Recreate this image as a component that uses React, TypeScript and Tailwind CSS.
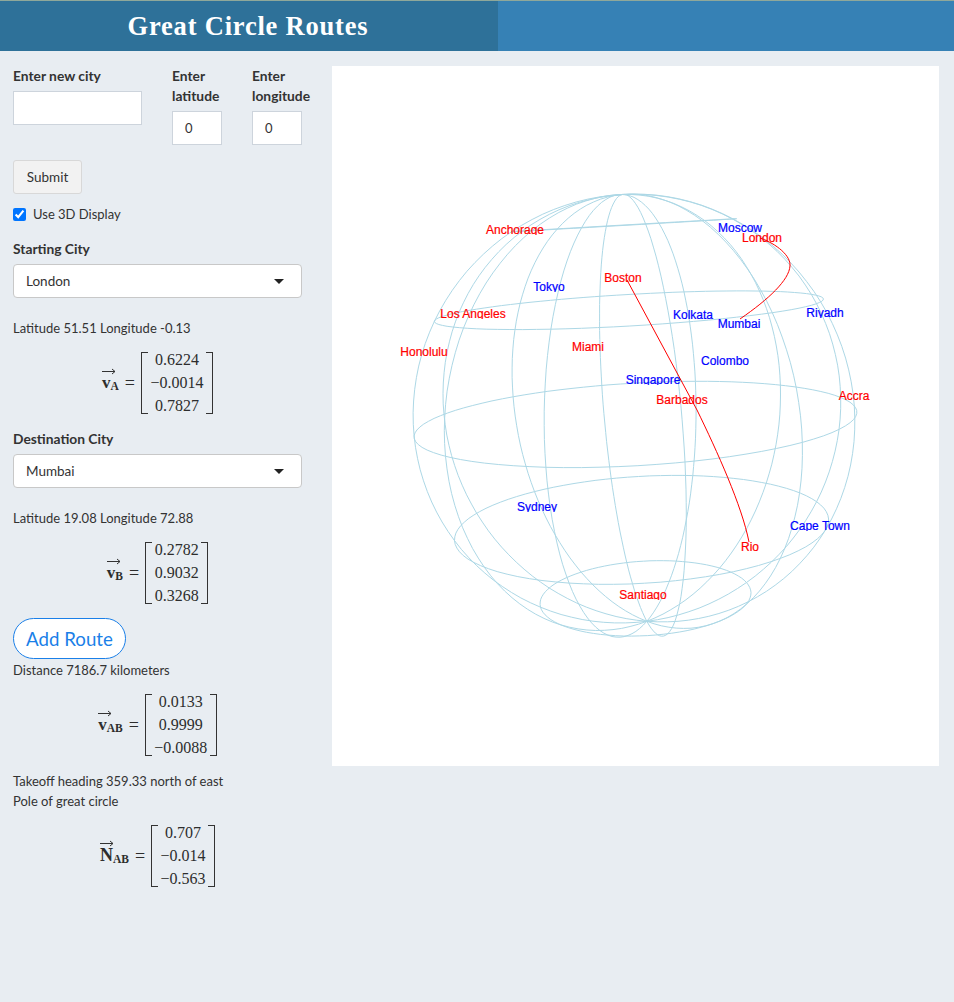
import React from "react";

// camera fit for the plotly globe
const CX = 303;
const CY = 350;
const DIST = 4.8;
const FOCAL = 1042;
const ELEV = (10.5 * Math.PI) / 180;
const ROLL = (3.3 * Math.PI) / 180;

function project(lat: number, lon: number) {
  const la = (lat * Math.PI) / 180;
  const lo = (lon * Math.PI) / 180;
  const x = Math.cos(la) * Math.sin(lo);
  const h = Math.sin(la);
  const d = Math.cos(la) * Math.cos(lo);
  const y = h * Math.cos(ELEV) - d * Math.sin(ELEV);
  const z = d * Math.cos(ELEV) + h * Math.sin(ELEV);
  const s = FOCAL / (DIST - z);
  const sx = x * s;
  const sy = y * s;
  return [
    CX + sx * Math.cos(ROLL) - sy * Math.sin(ROLL),
    CY - sx * Math.sin(ROLL) - sy * Math.cos(ROLL),
  ];
}

function toPath(points: number[][], close = false) {
  const d = points.map((p, i) => `${i === 0 ? "M" : "L"}${p[0].toFixed(1)} ${p[1].toFixed(1)}`).join(" ");
  return close ? d + " Z" : d;
}

const meridians = Array.from({ length: 12 }, (_, k) => {
  const pts: number[][] = [];
  for (let lat = -90; lat <= 90; lat += 3) pts.push(project(lat, 10 + 30 * k));
  return toPath(pts);
});

const rings = [60, 30, 0, -30, -60].map((lat) => {
  const pts: number[][] = [];
  for (let lon = 0; lon < 360; lon += 4) pts.push(project(lat, lon));
  return toPath(pts, true);
});

const routes = [
  "M428 172 C445 178 459 190 458 200 C457 214 437 233 408 253",
  "M295 214 L365 344 C385 385 410 440 417 476",
];

const cities = [
  { name: "Anchorage", x: 183, y: 164, c: "#ff0000" },
  { name: "Moscow", x: 408, y: 162, c: "#0000ff" },
  { name: "London", x: 430, y: 172, c: "#ff0000" },
  { name: "Boston", x: 291, y: 212, c: "#ff0000" },
  { name: "Tokyo", x: 217, y: 221, c: "#0000ff" },
  { name: "Los Angeles", x: 141, y: 248, c: "#ff0000" },
  { name: "Kolkata", x: 361, y: 249, c: "#0000ff" },
  { name: "Mumbai", x: 407, y: 258, c: "#0000ff" },
  { name: "Riyadh", x: 493, y: 247, c: "#0000ff" },
  { name: "Honolulu", x: 92, y: 286, c: "#ff0000" },
  { name: "Miami", x: 256, y: 281, c: "#ff0000" },
  { name: "Colombo", x: 393, y: 295, c: "#0000ff" },
  { name: "Singapore", x: 321, y: 314, c: "#0000ff" },
  { name: "Barbados", x: 350, y: 334, c: "#ff0000" },
  { name: "Accra", x: 522, y: 330, c: "#ff0000" },
  { name: "Sydney", x: 205, y: 441, c: "#0000ff" },
  { name: "Cape Town", x: 488, y: 460, c: "#0000ff" },
  { name: "Rio", x: 418, y: 481, c: "#ff0000" },
  { name: "Santiago", x: 311, y: 529, c: "#ff0000" },
];

function Globe() {
  return (
    <svg width="607" height="700" viewBox="0 0 607 700" className="block">
      <defs>
        {cities.map((c, i) => (
          <clipPath id={`lbl-${i}`} key={c.name}>
            <rect x={c.x - 60} y={c.y - 14} width="120" height="19" />
          </clipPath>
        ))}
      </defs>
      <g fill="none" stroke="#add8e6" strokeWidth="1">
        {meridians.map((d, i) => (
          <path key={i} d={d} />
        ))}
        {rings.map((d, i) => (
          <path key={i} d={d} />
        ))}
      </g>
      <g fill="none" stroke="#ff0000" strokeWidth="1">
        {routes.map((d, i) => (
          <path key={i} d={d} />
        ))}
      </g>
      {cities.map((c, i) => (
        <text
          key={c.name}
          x={c.x}
          y={c.y + 4}
          clipPath={`url(#lbl-${i})`}
          textAnchor="middle"
          fill={c.c}
          stroke={c.c}
          strokeWidth="0.2"
          fontSize="12"
          style={{ fontFamily: '"Liberation Sans", Arial, sans-serif' }}
        >
          {c.name}
        </text>
      ))}
    </svg>
  );
}

function MathVector({ sym, sub, values, big }: { sym: string; sub: string; values: string[]; big?: boolean }) {
  return (
    <div className="flex items-center justify-center font-['Liberation_Serif',serif] text-[16px] text-[#2d2d2d]">
      <span className="relative inline-flex items-baseline font-bold leading-[20px]">
        <svg width="14" height="7" viewBox="0 0 14 7" className="absolute left-0 -top-[5px]">
          <path d="M0 3.5H13M10 1L13 3.5L10 6" fill="none" stroke="#333" strokeWidth="1" />
        </svg>
        <span className={big ? "text-[18px]" : "text-[17px]"}>{sym}</span>
        <span className="text-[11.5px] translate-y-[2px]">{sub}</span>
      </span>
      <span className="mx-[6px] text-[18px]">=</span>
      <div className="relative flex flex-col h-[62px] px-[8.5px] justify-center items-center border-x-[1.5px] border-[#333]">
        <span className="absolute left-0 top-0 w-[6px] border-t-[1.5px] border-[#333]" />
        <span className="absolute left-0 bottom-0 w-[6px] border-b-[1.5px] border-[#333]" />
        <span className="absolute right-0 top-0 w-[6px] border-t-[1.5px] border-[#333]" />
        <span className="absolute right-0 bottom-0 w-[6px] border-b-[1.5px] border-[#333]" />
        {values.map((v) => (
          <span key={v} className="leading-[23px] shrink-0 -translate-y-[1px]">{v}</span>
        ))}
      </div>
    </div>
  );
}

function CitySelect({ value }: { value: string }) {
  return (
    <div className="flex items-center justify-between h-[34px] w-[289px] bg-white border border-[#c8c8c8] rounded-[4px] pl-[12px] pr-[17px] text-[13.5px]">
      <span>{value}</span>
      <span className="w-0 h-0 border-x-[5px] border-x-transparent border-t-[5px] border-t-[#222]" />
    </div>
  );
}

export default function App() {
  return (
    <div className="min-h-[1002px] bg-[#e8edf2] text-[13px] leading-[20px] text-[#333] font-['Lato','Noto_Sans',sans-serif]">
      <header className="flex h-[51px] border-t border-[#8fa89a]">
        <div className="flex w-[498px] items-center justify-center pr-[2px] bg-[#2e7199] text-white font-['Liberation_Serif',serif] font-bold text-[26.5px] tracking-[0.8px]">
          Great Circle Routes
        </div>
        <div className="flex-1 bg-[#3681b5]" />
      </header>
      <div className="flex">
        <aside className="w-[332px] pl-[13px] pt-[15px]">
          <div className="flex">
            <div className="w-[159px]">
              <div className="font-bold text-[13.8px] mb-[5px]">Enter new city</div>
              <div className="h-[34px] w-[129px] bg-white border border-[#cdd4dc]" />
            </div>
            <div className="w-[80px]">
              <div className="font-bold text-[13.8px] mb-[5px] w-[66px]">Enter<br />latitude</div>
              <div className="h-[34px] w-[50px] bg-white border border-[#cdd4dc] pl-[12px] leading-[32px]">0</div>
            </div>
            <div>
              <div className="font-bold text-[13.8px] mb-[5px] w-[66px]">Enter<br />longitude</div>
              <div className="h-[34px] w-[50px] bg-white border border-[#cdd4dc] pl-[12px] leading-[32px]">0</div>
            </div>
          </div>
          <button className="mt-[15px] h-[34px] w-[69px] bg-[#f2f2f2] border border-[#d8d8d8] rounded-[3px] text-[13.5px]">Submit</button>
          <label className="flex items-center mt-[10px] gap-[7px] h-[20px]">
            <input type="checkbox" defaultChecked readOnly className="w-[13px] h-[13px] accent-[#0075ff]" />
            Use 3D Display
          </label>
          <div className="font-bold text-[13.8px] mt-[15px] mb-[5px]">Starting City</div>
          <CitySelect value="London" />
          <p className="mt-[20px]">Latitude 51.51 Longitude -0.13</p>
          <div className="mt-[14px] w-[289px]">
            <MathVector sym="v" sub="A" values={["0.6224", "−0.0014", "0.7827"]} />
          </div>
          <div className="font-bold text-[13.8px] mt-[15px] mb-[5px]">Destination City</div>
          <CitySelect value="Mumbai" />
          <p className="mt-[20px]">Latitude 19.08 Longitude 72.88</p>
          <div className="mt-[14px] w-[289px]">
            <MathVector sym="v" sub="B" values={["0.2782", "0.9032", "0.3268"]} />
          </div>
          <button className="mt-[14px] block h-[41px] w-[113px] bg-white border border-[#1a7fe8] rounded-[21px] text-[#1a7fe8] text-[18.7px]">Add Route</button>
          <p className="mt-[1px]">Distance 7186.7 kilometers</p>
          <div className="mt-[14px] w-[289px]">
            <MathVector sym="v" sub="AB" values={["0.0133", "0.9999", "−0.0088"]} />
          </div>
          <p className="mt-[15px]">Takeoff heading 359.33 north of east</p>
          <p>Pole of great circle</p>
          <div className="mt-[14px] w-[289px]">
            <MathVector sym="N" sub="AB" values={["0.707", "−0.014", "−0.563"]} big />
          </div>
        </aside>
        <main className="pt-[15px]">
          <div className="w-[607px] h-[700px] bg-white">
            <Globe />
          </div>
        </main>
      </div>
    </div>
  );
}
